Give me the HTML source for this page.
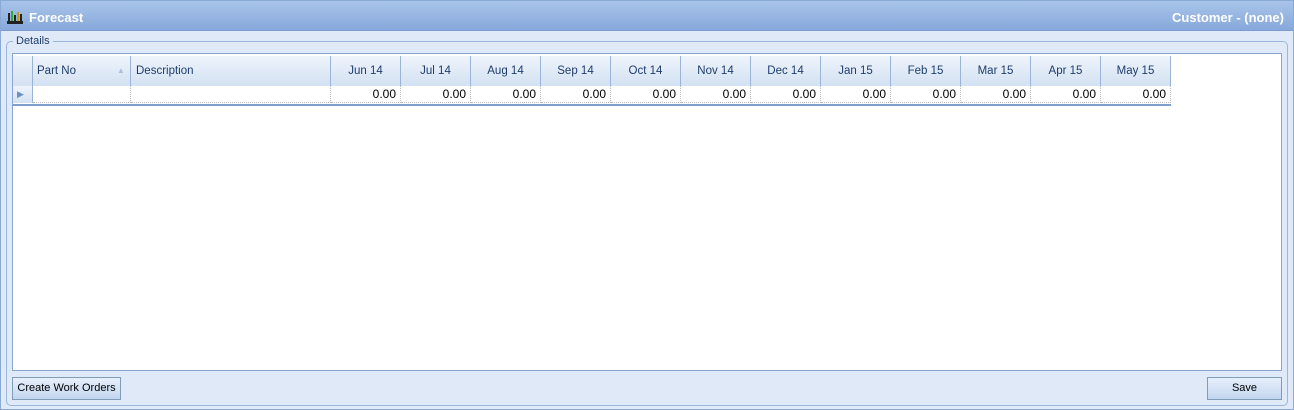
<!DOCTYPE html>
<html><head><style>
body{margin:0;width:1294px;height:410px;background:#fff;font-family:"Liberation Sans",sans-serif;font-size:12px;position:relative;overflow:hidden}
.a{position:absolute;box-sizing:border-box}
.frame{left:0;top:0;width:1294px;height:410px;background:#dfe9f8;border:1px solid #8aaad6}
.title{left:1px;top:1px;width:1292px;height:30px;background:linear-gradient(#a9c4ea,#86a8da);border-bottom:1px solid #7b9ccd;color:#fff;font-weight:bold;font-size:13px}
.grp{left:6px;top:41px;width:1282px;height:365px;border:1px solid #9db6dc;border-radius:5px}
.grid{left:12px;top:53px;width:1270px;height:318px;background:#fff;border:1px solid #8aa6cf}
.hdr{top:56px;height:30px;background:linear-gradient(#eef4fb,#d3e1f2);border-right:1px solid #9bb3d6;color:#1e3d6c;line-height:30px;white-space:nowrap;font-size:11.5px}
.cell{top:86px;height:17px;border-right:1px dotted #bbb;border-bottom:1px dotted #bbb;text-align:right;padding-right:4px;line-height:17px;color:#000}
.btn{height:23px;border:1px solid #7f9db9;background:linear-gradient(#e7effb,#c3d6f0);line-height:21px;text-align:center;color:#000;white-space:nowrap;font-size:11px}
</style></head><body>
<div class="a frame"></div>
<div class="a title">
 <svg class="a" style="left:6px;top:9px" width="16" height="14"><rect x="0" y="11" width="16" height="3" fill="#222"/><rect x="1" y="3" width="2" height="8" fill="#222"/><rect x="4" y="1" width="2" height="10" fill="#3a3"/><rect x="7" y="5" width="2" height="6" fill="#222"/><rect x="10" y="2" width="2" height="9" fill="#c90"/><rect x="13" y="4" width="2" height="7" fill="#222"/></svg>
 <span class="a" style="left:28px;top:9px">Forecast</span>
 <span class="a" style="right:9px;top:9px">Customer - (none)</span>
</div>
<div class="a grp"></div>
<span class="a" style="left:13px;top:35px;background:#dfe9f8;padding:0 3px;color:#1e3d6c;font-size:11px">Details</span>
<div class="a grid"></div>
<div class="a hdr" style="left:13px;width:20px"></div>
<div class="a hdr" style="left:33px;width:98px;padding-left:4px">Part No<span style="position:absolute;left:84px;top:0;color:#a9bfdc;font-size:8px">▲</span></div>
<div class="a hdr" style="left:131px;width:200px;padding-left:5px">Description</div>
<div class="a" style="left:13px;top:86px;width:20px;height:17px;background:linear-gradient(#eef4fb,#d3e1f2);border-right:1px solid #9bb3d6;color:#6d8fbf;font-size:9px;line-height:17px;padding-left:4px">▶</div>
<div class="a cell" style="left:33px;width:98px"></div>
<div class="a cell" style="left:131px;width:200px"></div>
<div class="a" style="left:13px;top:103px;width:1158px;height:3px;border-bottom:2px solid #7f9fcc"></div>
<div id="m"></div>
<script>
var n=["Jun 14","Jul 14","Aug 14","Sep 14","Oct 14","Nov 14","Dec 14","Jan 15","Feb 15","Mar 15","Apr 15","May 15"],h="";
n.forEach(function(t,i){var x=331+i*70;h+='<div class="a hdr" style="left:'+x+'px;width:70px;text-align:center">'+t+'</div><div class="a cell" style="left:'+x+'px;width:70px">0.00</div>';});
document.getElementById("m").innerHTML=h;
</script>
<div class="a btn" style="left:12px;top:377px;width:109px">Create Work Orders</div>
<div class="a btn" style="left:1207px;top:377px;width:75px">Save</div>
</body></html>
